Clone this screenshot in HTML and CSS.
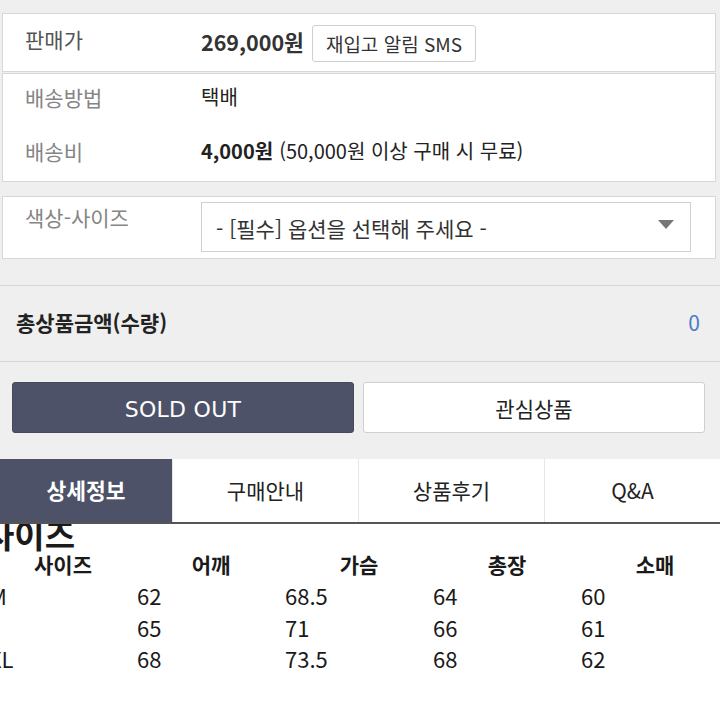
FILE: index.html
```html
<!DOCTYPE html>
<html lang="ko">
<head>
<meta charset="utf-8">
<link rel="stylesheet" href="styles.css">
</head>
<body>
<div class="top">
  <div class="box box-price">
    <div class="row">
      <div class="label label-dark">판매가</div>
      <div class="value"><span class="price">269,000원</span><button class="sms">재입고 알림 SMS</button></div>
    </div>
  </div>
  <div class="box box-ship">
    <div class="row ship-row">
      <div class="label">배송방법</div>
      <div class="value">택배</div>
    </div>
    <div class="row ship-row">
      <div class="label">배송비</div>
      <div class="value"><b>4,000원</b> (50,000원 이상 구매 시 무료)</div>
    </div>
  </div>
  <div class="box box-option">
    <div class="label opt-label">색상-사이즈</div>
    <div class="select">
      <span>- [필수] 옵션을 선택해 주세요 -</span>
      <svg class="arrow" width="16" height="9" viewBox="0 0 16 9"><path d="M0 0 H16 L8 9 Z" fill="#777"/></svg>
    </div>
  </div>
  <div class="total">
    <span class="total-label">총상품금액(수량)</span>
    <span class="total-num">0</span>
  </div>
  <div class="actions">
    <button class="btn btn-dark">SOLD OUT</button>
    <button class="btn btn-light">관심상품</button>
  </div>
  <div class="tabs">
    <div class="tab active">상세정보</div>
    <div class="tab">구매안내</div>
    <div class="tab">상품후기</div>
    <div class="tab last">Q&amp;A</div>
  </div>
</div>
<div class="content">
  <div class="title">사이즈</div>
  <div class="size-table">
    <div class="th">사이즈</div><div class="th">어깨</div><div class="th">가슴</div><div class="th">총장</div><div class="th">소매</div>
    <div class="td">M</div><div class="td">62</div><div class="td">68.5</div><div class="td">64</div><div class="td">60</div>
    <div class="td"></div><div class="td">65</div><div class="td">71</div><div class="td">66</div><div class="td">61</div>
    <div class="td">XL</div><div class="td">68</div><div class="td">73.5</div><div class="td">68</div><div class="td">62</div>
  </div>
</div>
</body>
</html>
```

FILE: styles.css
```css
* { box-sizing: border-box; }
html, body { margin: 0; padding: 0; }
body {
  width: 720px;
  height: 720px;
  overflow: hidden;
  background: #fff;
  font-family: "Noto Sans CJK KR", "Noto Sans", sans-serif;
  color: #222;
}
.top {
  background: #efefef;
  padding-top: 13px;
}
.box {
  background: #fff;
  border: 1px solid #d8d8d8;
  margin: 0 4px 0 2px;
}
.box-price { height: 59px; }
.row {
  display: flex;
  align-items: center;
  height: 57px;
  padding-left: 22px;
}
.label {
  width: 176px;
  font-size: 21px;
  color: #858585;
  flex: none;
}
.label-dark { color: #555; margin-top: -7px; }
.value {
  font-size: 20px;
  color: #222;
  display: flex;
  align-items: center;
}
.value b { font-weight: 700; margin-right: 6px; }
.price {
  font-weight: 700;
  font-size: 21.5px;
  color: #333;
  margin-top: -2px;
}
.sms {
  margin-left: 8px;
  height: 37px;
  padding: 0 13px;
  background: #fff;
  border: 1px solid #cfcfcf;
  border-radius: 3px;
  font-family: inherit;
  font-size: 19px;
  color: #333;
  margin-top: 2px;
}
.box-ship {
  margin-top: 1px;
  height: 109px;
  padding-top: 0;
}
.ship-row { height: 50px; margin-bottom: 4px; }
.ship-row .label, .ship-row .value { margin-top: -5px; }
.box-option {
  margin-top: 14px;
  height: 63px;
  display: flex;
  align-items: flex-start;
  padding: 5px 24px 0 22px;
}
.opt-label { padding-top: 0; }
.select {
  flex: 1;
  height: 50px;
  border: 1px solid #d0d0d0;
  display: flex;
  align-items: center;
  justify-content: space-between;
  padding: 0 16px 0 14px;
  font-size: 21px;
  color: #333;
}
.select span { margin-top: 2px; }
.arrow { margin-top: -6px; }
.total {
  margin-top: 26px;
  height: 77px;
  border-top: 1px solid #d6d6d6;
  border-bottom: 1px solid #d6d6d6;
  display: flex;
  align-items: center;
  justify-content: space-between;
  padding: 0 20px 4px 16px;
}
.total-label { font-size: 21px; font-weight: 700; color: #222; }
.total-num { font-size: 21px; color: #4a7cc9; }
.actions {
  display: flex;
  gap: 9px;
  padding: 20px 15px 0 12px;
}
.btn {
  flex: 1;
  height: 51px;
  border-radius: 3px;
  font-family: inherit;
  font-size: 21px;
}
.btn-dark {
  background: #4d5268;
  color: #fff;
  border: 1px solid #45495c;
  font-family: "DejaVu Sans", "Noto Sans", sans-serif;
  font-size: 22px;
  letter-spacing: 0.3px;
  padding-top: 4px;
}
.btn-light {
  background: #fff;
  color: #222;
  border: 1px solid #cfcfcf;
}
.tabs {
  margin-top: 26px;
  display: grid;
  grid-template-columns: 173px 186px 186px 1fr;
  height: 65px;
  border-bottom: 2px solid #555;
  background: #fff;
}
.tab {
  display: flex;
  align-items: center;
  justify-content: center;
  font-size: 21px;
  color: #222;
  border-right: 1px solid #e6e6e6;
  padding-bottom: 2px;
}
.tab.last { border-right: none; }
.tab.active {
  background: #4d5268;
  color: #fff;
  font-weight: 700;
  font-size: 21.5px;
}
.content {
  background: #fff;
  overflow: hidden;
  height: 200px;
}
.title {
  font-size: 33px;
  font-weight: 700;
  line-height: 28px;
  margin: -4px 0 0 -16px;
  color: #1a1a1a;
}
.size-table {
  display: grid;
  grid-template-columns: repeat(5, 148px);
  margin-left: -11px;
  margin-top: 0px;
}
.th {
  text-align: center;
  font-size: 21px;
  font-weight: 700;
  height: 32px;
  line-height: 32px;
  color: #1a1a1a;
}
.td {
  font-size: 22px;
  height: 31.5px;
  line-height: 30px;
  color: #1a1a1a;
}
```
